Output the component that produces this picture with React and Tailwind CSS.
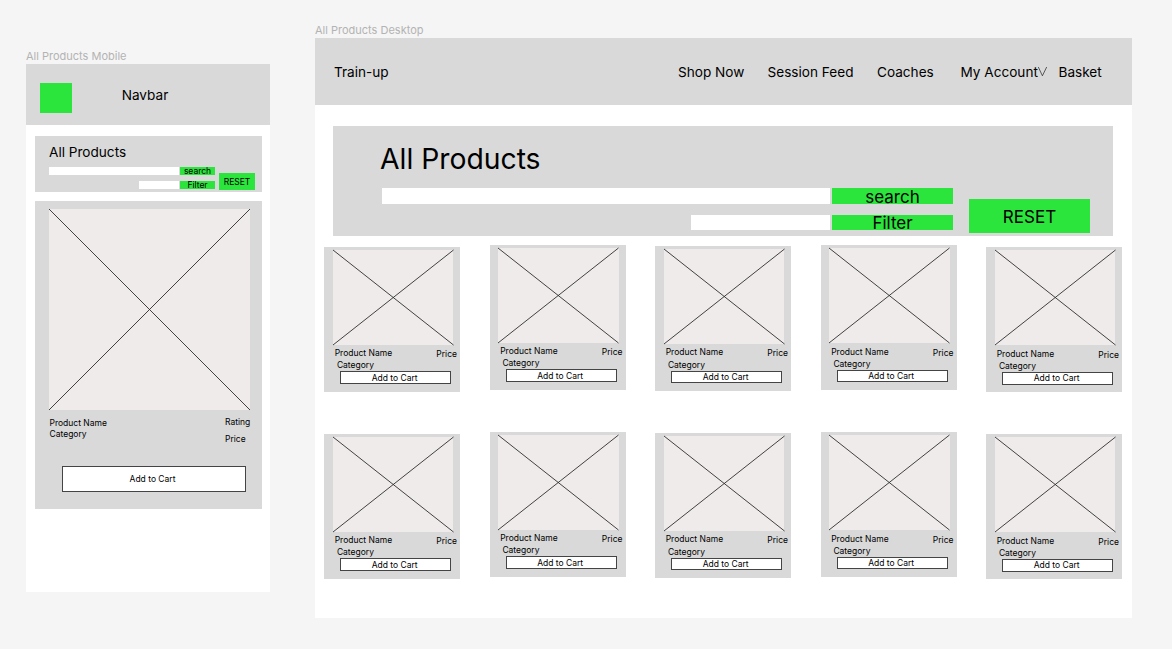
const offsets = [
  "mt-[2.7px]",
  "mt-[0.8px]",
  "mt-[2.1px]",
  "mt-[1.2px]",
  "mt-[3.4px]",
];

function ImagePlaceholder({ className, width, height }) {
  return (
    <svg
      className={`block shrink-0 overflow-visible bg-[#efebeb] ${className}`}
      viewBox={`0 0 ${width} ${height}`}
      preserveAspectRatio="none"
      fill="none"
      stroke="#222"
      strokeWidth="0.85"
    >
      <path d={`M0 0L${width} ${height}M${width} 0L0 ${height}`} />
    </svg>
  );
}

function ProductCard({ offset }) {
  return (
    <article
      className={`flex h-[145px] w-[136px] shrink-0 flex-col bg-[#d9d9d9] pt-[3px] text-[8.5px] leading-[10px] ${offset}`}
    >
      <ImagePlaceholder className="ml-[8.5px] h-[95px] w-[120.5px]" width={120.5} height={95} />
      <div className="flex justify-between pt-[3.4px] pr-[3.2px] pl-[10.5px]">
        <span>Product Name</span>
        <span className="pt-[1px]">Price</span>
      </div>
      <div className="mt-[1.1px] pl-[12.7px]">Category</div>
      <button className="mt-[1.2px] ml-[16px] flex h-[12.5px] w-[111px] shrink-0 items-center justify-center border border-[#444] bg-white pr-[2px] leading-[10px]">
        Add to Cart
      </button>
    </article>
  );
}

function MobileFrame() {
  return (
    <section className="flex w-[244px] flex-col">
      <h2 className="h-[15px] text-[11px] leading-[14px] whitespace-nowrap text-[#b3b3b3]">All Products Mobile</h2>
      <div className="flex h-[528px] flex-col bg-white">
        <header className="flex h-[61px] shrink-0 items-start bg-[#d9d9d9] pt-[19px] pl-[14px]">
          <div className="h-[30px] w-[31.7px] bg-[#2be53d]" />
          <span className="mt-[4px] ml-[50px] text-[13.6px] leading-[16px]">Navbar</span>
        </header>
        <div className="mt-[11px] ml-[9px] flex h-[56px] w-[226.5px] shrink-0 flex-col bg-[#d9d9d9] pt-[8px] pl-[14px]">
          <h1 className="text-[13.6px] leading-[16px]">All Products</h1>
          <div className="mt-[7px] flex text-[8.5px]">
            <div className="flex w-[166px] flex-col gap-[6px]">
              <div className="flex h-[8px] justify-end gap-[1px]">
                <div className="w-[130px] bg-white" />
                <button className="flex w-[35px] items-center justify-center bg-[#2be53d] leading-[8px]">search</button>
              </div>
              <div className="flex h-[8px] justify-end gap-[1px]">
                <div className="w-[40px] bg-white" />
                <button className="flex w-[35px] items-center justify-center bg-[#2be53d] leading-[8px]">Filter</button>
              </div>
            </div>
            <button className="mt-[6px] ml-[4px] flex h-[17px] w-[36px] items-center justify-center bg-[#2be53d] pt-[1.5px]">
              RESET
            </button>
          </div>
        </div>
        <article className="mt-[9.3px] ml-[9px] flex h-[307.5px] w-[227px] shrink-0 flex-col bg-[#d9d9d9] pt-[8px] text-[8.5px] leading-[10px]">
          <ImagePlaceholder className="ml-[14px] h-[201px] w-[201px]" width={201} height={201} />
          <div className="flex h-[56px] justify-between pt-[7px] pl-[14.5px]">
            <div className="pt-[1px]">
              <div>Product Name</div>
              <div className="pt-[0.5px]">Category</div>
            </div>
            <div className="w-[37px]">
              <div>Rating</div>
              <div className="mt-[7px]">Price</div>
            </div>
          </div>
          <button className="ml-[27px] flex h-[26px] w-[184px] items-center justify-center border border-[#444] bg-white pr-[3px]">
            Add to Cart
          </button>
        </article>
      </div>
    </section>
  );
}

function DesktopFrame() {
  return (
    <section className="flex w-[817px] flex-col">
      <h2 className="h-[15px] text-[11px] leading-[14px] whitespace-nowrap text-[#b3b3b3]">All Products Desktop</h2>
      <div className="flex h-[580px] flex-col bg-white">
        <header className="flex h-[67px] shrink-0 items-center bg-[#d9d9d9] pl-[19px] text-[13.6px] leading-[16px] whitespace-nowrap">
          <span className="w-[344px]">Train-up</span>
          <nav className="flex items-center">
            <a className="w-[89.5px]">Shop Now</a>
            <a className="w-[109.5px]">Session Feed</a>
            <a className="w-[83.5px]">Coaches</a>
            <a className="flex w-[98px] items-center">
              <span className="w-[77px]">My Account</span>
              <svg className="h-[9px] w-[9px]" viewBox="0 0 9 9" fill="none" stroke="#222" strokeWidth="0.7">
                <path d="M0.3 0L4.4 8.8L8.7 0" />
              </svg>
            </a>
            <a>Basket</a>
          </nav>
        </header>
        <div className="mt-[21px] ml-[18px] flex h-[110px] w-[780px] shrink-0 flex-col bg-[#d9d9d9] pt-[16px] pl-[47px]">
          <h1 className="text-[28.3px] leading-[34px]">All Products</h1>
          <div className="mt-[12px] ml-[2px] flex text-[17px]">
            <div className="flex w-[571px] flex-col gap-[11px]">
              <div className="flex h-[16px] justify-end gap-[2px]">
                <div className="w-[448px] bg-white" />
                <button className="flex w-[121px] items-center justify-center bg-[#2be53d] pt-[1px] leading-[16px]">search</button>
              </div>
              <div className="flex h-[15px] justify-end gap-[2px]">
                <div className="w-[139px] bg-white" />
                <button className="flex w-[121px] items-center justify-center bg-[#2be53d] pt-[1px] leading-[16px]">Filter</button>
              </div>
            </div>
            <button className="mt-[11px] ml-[16px] flex h-[33.5px] w-[121px] items-center justify-center bg-[#2be53d] pt-[4.5px]">
              RESET
            </button>
          </div>
        </div>
        {[0, 1].map((row) => (
          <div key={row} className="mt-[8px] ml-[9.2px] flex h-[179px] shrink-0 items-start gap-[29.5px]">
            {offsets.map((offset) => (
              <ProductCard key={offset} offset={offset} />
            ))}
          </div>
        ))}
      </div>
    </section>
  );
}

export default function App() {
  return (
    <main className="flex h-[649px] w-[1172px] items-start gap-[45px] overflow-hidden bg-[#f5f5f5] pl-[26px] font-['Inter',sans-serif] text-black">
      <div className="pt-[49px]">
        <MobileFrame />
      </div>
      <div className="pt-[23px]">
        <DesktopFrame />
      </div>
    </main>
  );
}
